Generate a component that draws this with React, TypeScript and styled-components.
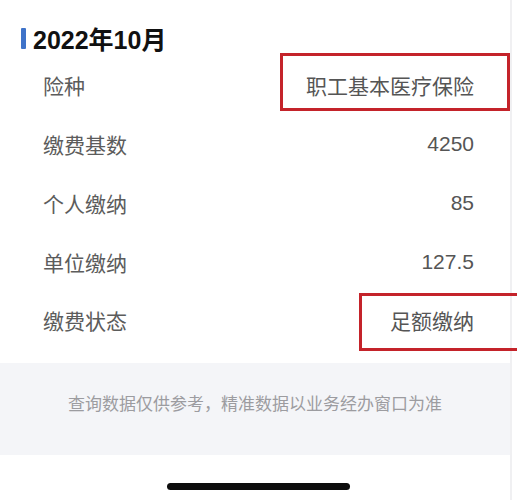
import styled, { createGlobalStyle } from 'styled-components';

const GlobalStyle = createGlobalStyle`
  html, body {
    margin: 0;
    padding: 0;
    background: #fff;
  }
  body {
    font-family: "Liberation Sans", "Noto Sans CJK SC", sans-serif;
  }
`;

const Page = styled.div`
  width: 510px;
  height: 500px;
  border-right: 2px solid #f0f0f2;
  box-sizing: content-box;
  display: flex;
  flex-direction: column;
`;

const Title = styled.div`
  height: 56px;
  display: flex;
  align-items: center;
  padding: 20px 0 0 21px;
  box-sizing: border-box;
  font-size: 25px;
  font-weight: 700;
  color: #111;
  gap: 7px;

  &::before {
    content: '';
    width: 5px;
    height: 21px;
    background: #3f73c9;
    border-radius: 1px;
    margin-top: 1px;
  }
`;

const List = styled.div`
  display: flex;
  flex-direction: column;
`;

const Row = styled.div`
  position: relative;
  height: 58.75px;
  display: flex;
  align-items: center;
  justify-content: space-between;
  padding: 0 36px 0 43px;
  font-size: 21px;
  color: #5c5c5c;
`;

const Label = styled.span``;

const Value = styled.span`
  color: #555;
`;

const Highlight = styled.div<{ $left: number; $right: number; $top: number }>`
  position: absolute;
  left: ${(p) => p.$left}px;
  right: ${(p) => p.$right}px;
  top: ${(p) => p.$top}px;
  height: 58px;
  border: 3px solid #c4232a;
  box-sizing: border-box;
  pointer-events: none;
`;

const Notice = styled.div`
  margin-top: 13px;
  height: 92px;
  padding-bottom: 12px;
  box-sizing: border-box;
  background: #f4f5f8;
  display: flex;
  align-items: center;
  justify-content: center;
  font-size: 17px;
  color: #9c9ca0;
  font-family: "Noto Sans CJK SC", sans-serif;
`;

const Bottom = styled.div`
  flex: 1;
  display: flex;
  justify-content: center;
  padding-top: 28px;
  margin-right: -7px;
`;

const HomeBar = styled.div`
  width: 183px;
  height: 7px;
  border-radius: 4px;
  background: #0d0d0d;
`;

const rows = [
  { label: '险种', value: '职工基本医疗保险', box: { left: 280, right: 0, top: -3 } },
  { label: '缴费基数', value: '4250' },
  { label: '个人缴纳', value: '85' },
  { label: '单位缴纳', value: '127.5' },
  { label: '缴费状态', value: '足额缴纳', box: { left: 359, right: -10, top: 2 } },
];

export default function App() {
  return (
    <Page>
      <GlobalStyle />
      <Title>2022年10月</Title>
      <List>
        {rows.map((r) => (
          <Row key={r.label}>
            <Label>{r.label}</Label>
            <Value>{r.value}</Value>
            {r.box && <Highlight $left={r.box.left} $right={r.box.right} $top={r.box.top} />}
          </Row>
        ))}
      </List>
      <Notice>查询数据仅供参考，精准数据以业务经办窗口为准</Notice>
      <Bottom>
        <HomeBar />
      </Bottom>
    </Page>
  );
}
